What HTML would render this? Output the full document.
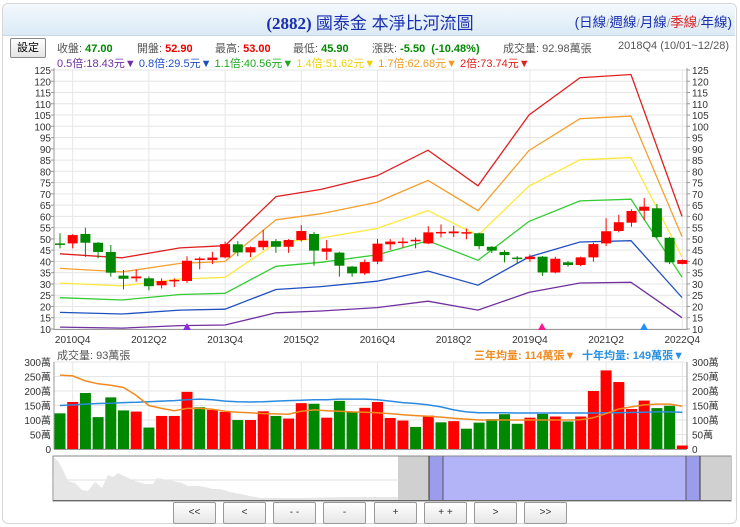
<!DOCTYPE html>
<html><head><meta charset="utf-8"><style>
body{margin:0;width:740px;height:527px;background:#fff;font-family:"Liberation Sans","Noto Sans CJK TC",sans-serif;overflow:hidden;position:relative}
.box{position:absolute;left:2px;top:3px;width:733px;height:519px;border:1px solid #d6d6d6;border-radius:6px}
.hdr{position:absolute;left:3px;top:4px;width:732px;height:31px;background:linear-gradient(#f4f9fd,#dbeaf6);border-bottom:1px solid #c8d8e6;border-radius:6px 6px 0 0}
.title{position:absolute;left:0;width:740px;top:9px;text-align:center;font-size:17px;color:#1a2fb0;font-weight:bold;font-family:"Liberation Serif","Noto Sans CJK TC",sans-serif}
.title span{font-family:"Liberation Sans","Noto Sans CJK TC",sans-serif;font-weight:normal}
.links{position:absolute;right:8px;top:11px;font-size:13.5px;color:#1a2fb0}
.links span{color:#999;font-size:12px}
.row{position:absolute;font-size:11px;color:#555;white-space:nowrap}
.btn{position:absolute;top:502px;width:41px;height:20px;border:1px solid #999;border-radius:2px;background:linear-gradient(#fff,#e6e6e6);font-size:10px;text-align:center;line-height:20px;color:#333}
</style></head><body>
<div class="box"></div>
<div class="hdr"></div>
<div class="title">(2882) <span>國泰金 本淨比河流圖</span></div>
<div class="links">(日線<span>/</span>週線<span>/</span>月線<span>/</span><b style="font-weight:normal;color:#e02020">季線</b><span>/</span>年線)</div>
<div style="position:absolute;left:10px;top:38px;width:34px;height:18px;border:1px solid #888;background:linear-gradient(#fff,#e4e4e4);font-size:11px;text-align:center;line-height:18px;border-radius:2px">設定</div>
<div class="row" style="left:57px;top:40px">收盤: <b style="color:#080">47.00</b></div>
<div class="row" style="left:137px;top:40px">開盤: <b style="color:#e00">52.90</b></div>
<div class="row" style="left:215px;top:40px">最高: <b style="color:#e00">53.00</b></div>
<div class="row" style="left:293px;top:40px">最低: <b style="color:#080">45.90</b></div>
<div class="row" style="left:372px;top:40px">漲跌: <b style="color:#080">-5.50 &nbsp;(-10.48%)</b></div>
<div class="row" style="left:503px;top:40px">成交量: 92.98萬張</div>
<div class="row" style="left:618px;top:40px">2018Q4 (10/01~12/28)</div>
<div class="row" style="left:57px;top:55px"><span style="color:#7030a0">0.5倍:18.43元▼</span> <span style="color:#2050c0">0.8倍:29.5元▼</span> <span style="color:#1fa81f">1.1倍:40.56元▼</span> <span style="color:#f0d000">1.4倍:51.62元▼</span> <span style="color:#f39a20">1.7倍:62.68元▼</span> <span style="color:#e02020">2倍:73.74元▼</span></div>
<svg id="s" width="740" height="527" style="position:absolute;left:0;top:0" font-family="Liberation Sans, Noto Sans CJK TC, sans-serif"></svg>
<div class="btn" style="left:173px">&lt;&lt;</div>
<div class="btn" style="left:223px">&lt;</div>
<div class="btn" style="left:273px">- -</div>
<div class="btn" style="left:323px">-</div>
<div class="btn" style="left:374px">+</div>
<div class="btn" style="left:424px">+ +</div>
<div class="btn" style="left:474px">&gt;</div>
<div class="btn" style="left:524px">&gt;&gt;</div>
<script>
var s=document.getElementById('s'),h='';
function Y(v){return 70+(125-v)*2.252}
function X(i){return 60+12.7*i}
function VY(v){return 449-v*0.29}
for(var v=10;v<=125;v+=5){var y=Y(v);h+='<line x1="54" x2="687" y1="'+y+'" y2="'+y+'" stroke="#e6e6e6"/>';
h+='<text x="51" y="'+(y+4)+'" font-size="10" text-anchor="end" fill="#333">'+v+'</text><text x="692" y="'+(y+4)+'" font-size="10" fill="#333">'+v+'</text>';
h+='<line x1="51" x2="54" y1="'+y+'" y2="'+y+'" stroke="#999"/><line x1="687" x2="690" y1="'+y+'" y2="'+y+'" stroke="#999"/>';}
var labs=['2010Q4','2012Q2','2013Q4','2015Q2','2016Q4','2018Q2','2019Q4','2021Q2','2022Q4'];
for(var k=0;k<9;k++){var x=X(1+6*k);h+='<line x1="'+x+'" x2="'+x+'" y1="70" y2="329" stroke="#e6e6e6"/><line x1="'+x+'" x2="'+x+'" y1="362" y2="449" stroke="#e6e6e6"/><text x="'+x+'" y="343" font-size="10" text-anchor="middle" fill="#333">'+labs[k]+'</text>';}
h+='<line x1="54" x2="54" y1="68" y2="330" stroke="#999"/><line x1="687" x2="687" y1="68" y2="330" stroke="#999"/><line x1="54" x2="687" y1="329.5" y2="329.5" stroke="#999"/>';
var bx=[60,122,180,225,276,321,377,428,478,529,580,631,682],bv=[21.7,20.8,23,23.5,34.4,36,39,44.7,36.8,52.5,60.8,61.5,30];
var mul=[0.5,0.8,1.1,1.4,1.7,2],col=['#7030a0','#2050c0','#33cc33','#ffe83a','#f5a030','#e02020'];
for(var m=0;m<6;m++){var p='';for(var j=0;j<bx.length;j++)p+=(j?'L':'M')+bx[j]+' '+Y(bv[j]*mul[m]).toFixed(1);h+='<path d="'+p+'" fill="none" stroke="'+col[m]+'" stroke-width="1.3"/>';}
var c=[[48,47.6,52.5,45.8],[48,51.7,52.1,45.8],[52.2,48.3,55,42],[48.3,44.2,48.6,41.4],[44.2,35,47.3,33.2],[33.7,32.3,36.2,27.6],[32.5,33.3,36.4,31],[32.5,29,33.3,27.2],[29.4,31.3,32.5,28],[31.4,31.8,32.5,28.6],[31.3,40.3,42.3,30.5],[40.8,41.3,42,36.5],[40.6,41.7,44.3,38.8],[41.8,47.7,48.8,41.4],[47.6,44,49,42.3],[44,46.3,46.6,41.9],[46.3,49.2,54,45.1],[49,46.5,49.9,43.8],[46.5,49.5,49.9,43.8],[49.5,53.5,56.1,48.8],[52.2,44.8,53.1,38.1],[44.3,45.8,49.5,40.6],[43.9,38.1,44.3,33.2],[37.7,34.7,38,33.2],[34.7,39.7,40.9,34],[39.9,47.9,50,38.8],[47.6,48.8,49.9,45.1],[48.2,48.8,50.6,46.2],[49,49.6,50.6,45.8],[48,52.9,55.6,47.7],[52.8,53.1,56.4,50.6],[52.5,53.3,55.8,50.8],[52.8,53,54.6,49.8],[52.5,46.8,52.8,45.4],[46.5,44.8,46.8,43.7],[44.2,42.8,45,39.6],[41.7,41.4,42.4,39.2],[41,42.1,43.1,39.8],[42.1,35.1,42.4,33.5],[35.1,41.2,42.1,34.7],[39.6,38.4,40.2,37.7],[38.4,41.8,42.1,37.9],[41.8,47.7,48.3,39.9],[48,53.4,59.2,46.8],[53.5,57.4,60.7,52.9],[57.2,62.4,63.1,55.4],[62.5,64.3,68.2,58.3],[63.6,50.8,65.5,50.4],[50.5,39.6,50.9,38.8],[38.9,40.6,40.9,38.7]];
for(var i=0;i<c.length;i++){var d=c[i],x=X(i),up=d[1]>=d[0],cl=up?'#f00':'#080',t=Y(Math.max(d[0],d[1])),b=Y(Math.min(d[0],d[1]));if(b-t<1.5)b=t+1.5;
h+='<line x1="'+x+'" x2="'+x+'" y1="'+Y(d[2])+'" y2="'+Y(d[3])+'" stroke="'+cl+'"/><rect x="'+(x-5)+'" y="'+t+'" width="10" height="'+(b-t)+'" fill="'+cl+'"/>';}
h+='<path d="M183 330L187 323L191 330Z" fill="#8a2be2"/><path d="M538 330L542 323L546 330Z" fill="#ff1493"/><path d="M640 330L644 323L648 330Z" fill="#1e90ff"/>';
h+='<text x="57" y="359" font-size="11" fill="#555">成交量: 93萬張</text>';
h+='<text x="474" y="359" font-size="11" fill="#f08a20" font-weight="bold">三年均量: 114萬張▼</text><text x="582" y="359" font-size="11" fill="#2a90e0" font-weight="bold">十年均量: 149萬張▼</text>';
for(var v=0;v<=300;v+=50){var y=VY(v),lb=v?v+'萬':'0';h+='<line x1="54" x2="687" y1="'+y+'" y2="'+y+'" stroke="#e6e6e6"/><text x="51" y="'+(y+4)+'" font-size="10" text-anchor="end" fill="#333">'+lb+'</text><text x="692" y="'+(y+4)+'" font-size="10" fill="#333">'+lb+'</text>';}
h+='<line x1="54" x2="54" y1="362" y2="449" stroke="#999"/><line x1="687" x2="687" y1="362" y2="449" stroke="#999"/><line x1="54" x2="687" y1="449.5" y2="449.5" stroke="#999"/>';
var vv=[123,162,193,110,178,133,129,74,114,114,197,144,135,128,100,100,130,114,105,158,156,108,166,128,142,162,107,98,76,115,92,96,70,91,103,120,87,108,121,112,95,112,200,271,231,138,167,141,149,12];
var vc='grggggrgrrrgrrgrrgrrgrggrrrrgrgrgggggrgrgrrrrrrggr';
for(var i=0;i<50;i++){var x=X(i);h+='<rect x="'+(x-5.5)+'" y="'+VY(vv[i])+'" width="11" height="'+(vv[i]*0.29)+'" fill="'+(vc[i]=='g'?'#080':'#f00')+'"/>';}
var o=[255,252,235,225,220,212,185,150,140,132,140,140,137,130,127,125,122,121,120,130,135,132,130,128,127,125,122,118,115,113,110,106,103,100,100,100,100,100,100,100,100,101,108,122,138,145,152,155,155,148];
var bl=[150,152,155,157,158,160,161,163,165,167,170,172,170,165,163,162,163,165,167,168,170,170,172,172,172,170,165,160,157,152,145,135,128,125,125,125,124,124,124,124,124,124,124,125,125,126,127,128,128,127];
var po='',pb='';for(var i=0;i<50;i++){po+=(i?'L':'M')+X(i)+' '+VY(o[i]).toFixed(1);pb+=(i?'L':'M')+X(i)+' '+VY(bl[i]).toFixed(1);}
h+='<path d="'+pb+'" fill="none" stroke="#2a8ae0" stroke-width="1.5"/><path d="'+po+'" fill="none" stroke="#f08a20" stroke-width="1.5"/>';
h+='<rect x="53" y="456" width="678" height="45" fill="#fff" stroke="#888"/><line x1="53" x2="731" y1="480" y2="480" stroke="#ddd"/>';
h+='<path d="M54 500L54 458L58 461L63 470L68 481L75 483L82 490L88 491L95 482L102 488L108 475L113 477L118 473L124 476L135 481L145 484L153 484L157 478L168 480L182 483L188 486L198 486L205 487L213 489L220 489L230 492L245 495L260 498L300 498L350 497L398 497L398 500Z" fill="#e6e6e6"/>';
h+='<rect x="398" y="456.5" width="31" height="44" fill="#d0d0d0"/><rect x="700" y="456.5" width="31" height="44" fill="#d0d0d0"/>';
h+='<rect x="429" y="456.5" width="271" height="44" fill="#b3b3f8"/><rect x="429" y="456.5" width="14" height="44" fill="#9c9cec"/><rect x="686" y="456.5" width="14" height="44" fill="#9c9cec"/>';
h+='<line x1="429" x2="429" y1="456" y2="501" stroke="#333"/><line x1="443" x2="443" y1="456" y2="501" stroke="#555"/><line x1="686" x2="686" y1="456" y2="501" stroke="#555"/><line x1="700" x2="700" y1="456" y2="501" stroke="#333"/>';
h+='<line x1="53" x2="731" y1="500.5" y2="500.5" stroke="#666"/>';
s.innerHTML=h;
</script>
</body></html>
